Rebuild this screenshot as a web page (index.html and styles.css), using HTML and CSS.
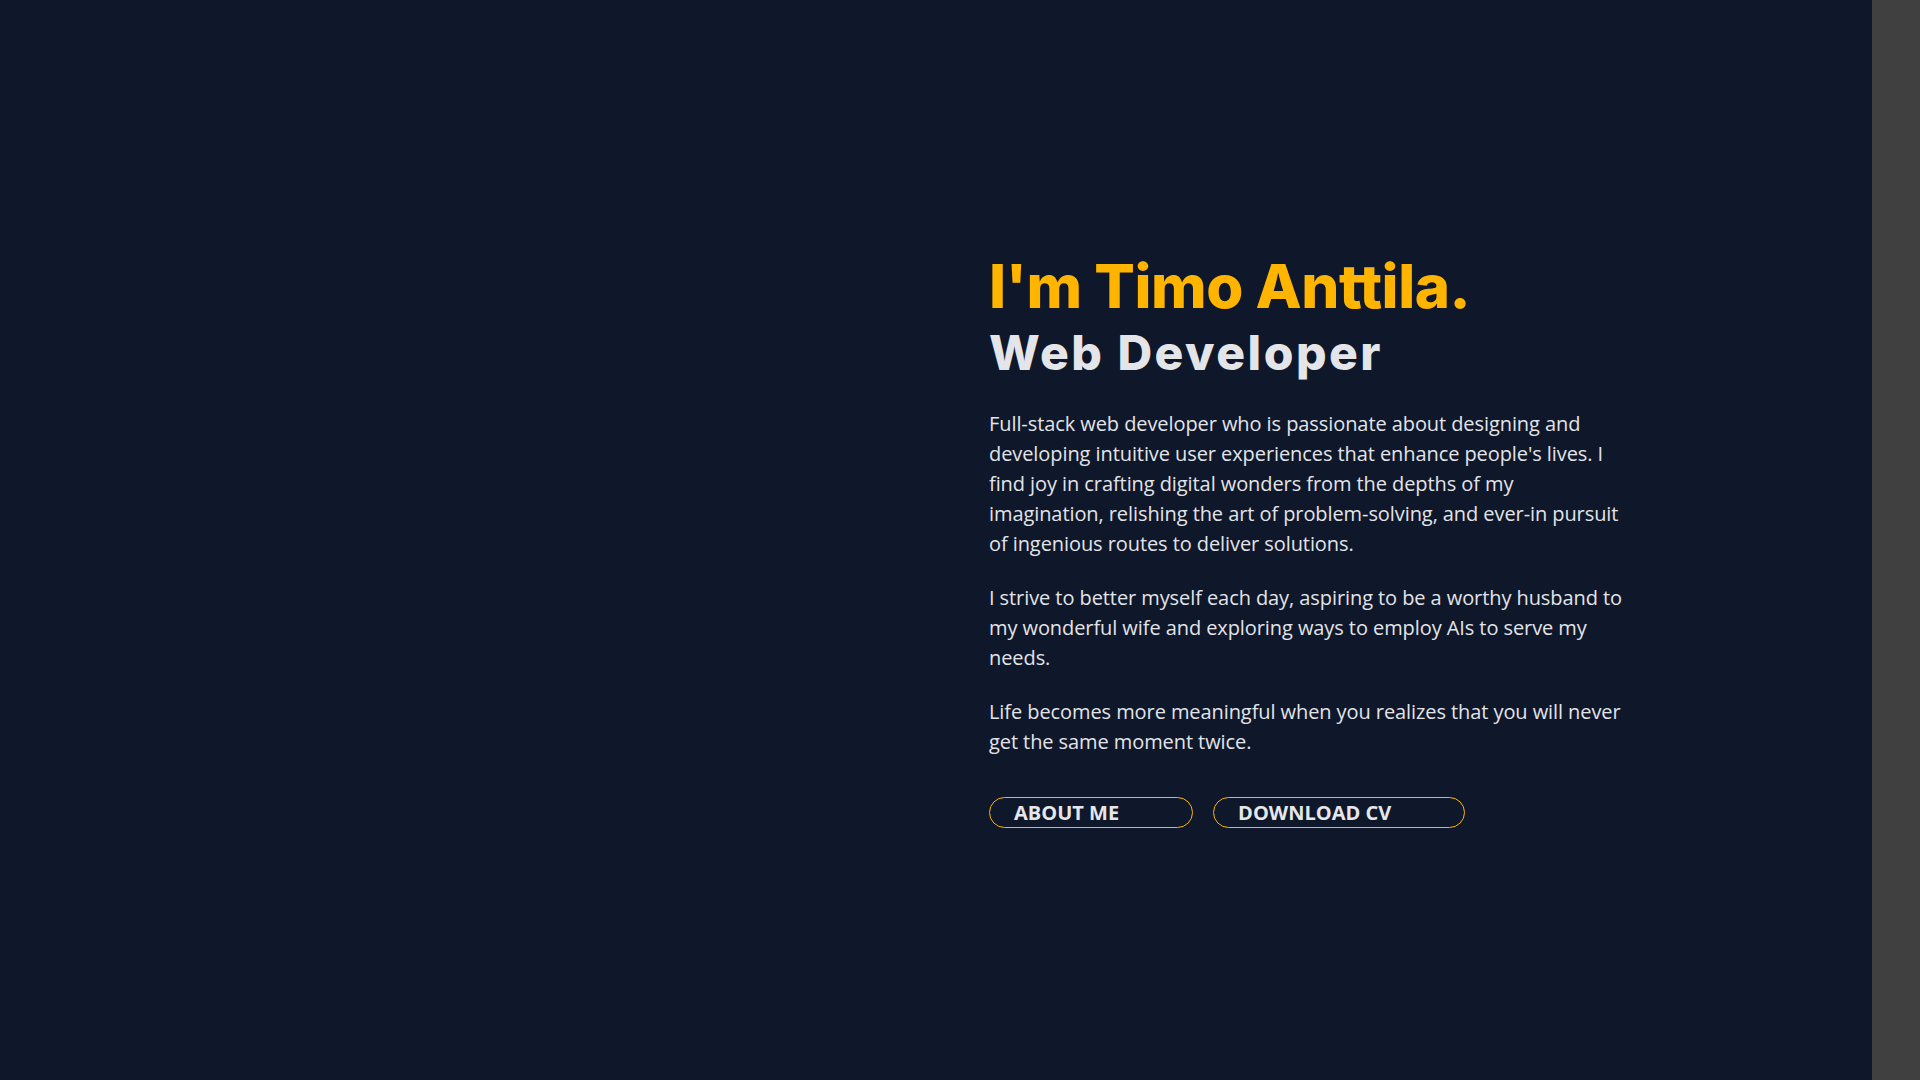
FILE: index.html
```html
<!DOCTYPE html>
<html lang="en">
<head>
<meta charset="utf-8">
<title>Timo Anttila – Web Developer</title>
<link rel="stylesheet" href="styles.css">
</head>
<body>
<div class="page">
  <main class="hero">
    <div class="hero-media"></div>
    <section class="hero-content">
      <h1 class="hero-title">
        <span class="hero-name">I'm Timo Anttila.</span>
        <span class="hero-role">Web Developer</span>
      </h1>
      <p class="hero-text">Full-stack web developer who is passionate about designing and developing intuitive user experiences that enhance people's lives. I find joy in crafting digital wonders from the depths of my imagination, relishing the art of problem-solving, and ever-in pursuit of ingenious routes to deliver solutions.</p>
      <p class="hero-text">I strive to better myself each day, aspiring to be a worthy husband to my wonderful wife and exploring ways to employ AIs to serve my needs.</p>
      <p class="hero-text">Life becomes more meaningful when you realizes that you will never get the same moment twice.</p>
      <div class="hero-actions">
        <a class="btn btn-about" href="#about">ABOUT ME</a>
        <a class="btn btn-cv" href="#cv">DOWNLOAD CV</a>
      </div>
    </section>
  </main>
  <aside class="sidebar"></aside>
</div>
</body>
</html>
```
FILE: styles.css
```css
* {
  box-sizing: border-box;
}

html, body {
  margin: 0;
  padding: 0;
}

body {
  background: #0f172a;
  color: #e5e7eb;
  font-family: "Open Sans", "Liberation Sans", sans-serif;
}

.page {
  display: flex;
  height: 100vh;
  overflow: hidden;
}

.hero {
  flex: 1;
  display: grid;
  grid-template-columns: 1fr 1fr;
  column-gap: 106px;
  align-items: center;
}

.hero-content {
  max-width: 640px;
}

.hero-title {
  margin: 0;
  font-family: "Inter", "Noto Sans", sans-serif;
  font-weight: 800;
  font-variant-ligatures: none;
  font-feature-settings: "liga" 0, "calt" 0;
}

.hero-name {
  display: block;
  font-size: 60px;
  line-height: 66px;
  color: #ffb400;
  letter-spacing: -0.45px;
}

.hero-role {
  display: block;
  font-size: 48px;
  line-height: 68px;
  color: #e3e5e8;
  letter-spacing: 2.5px;
}

.hero-text {
  margin: 24px 0 0;
  font-size: 20px;
  line-height: 30px;
  letter-spacing: -0.08px;
  color: #e2e4e8;
}

.hero-text:first-of-type {
  margin-top: 22px;
}

.hero-actions {
  display: flex;
  gap: 20px;
  margin-top: 40px;
}

.btn {
  display: inline-block;
  height: 31px;
  line-height: 29px;
  padding: 0 73px 0 24px;
  border: 1px solid #ffb400;
  border-radius: 999px;
  color: #e5e7eb;
  font-size: 20px;
  font-weight: 700;
  text-decoration: none;
  white-space: nowrap;
}

.sidebar {
  width: 48px;
  flex: none;
  background: #404040;
}
```
